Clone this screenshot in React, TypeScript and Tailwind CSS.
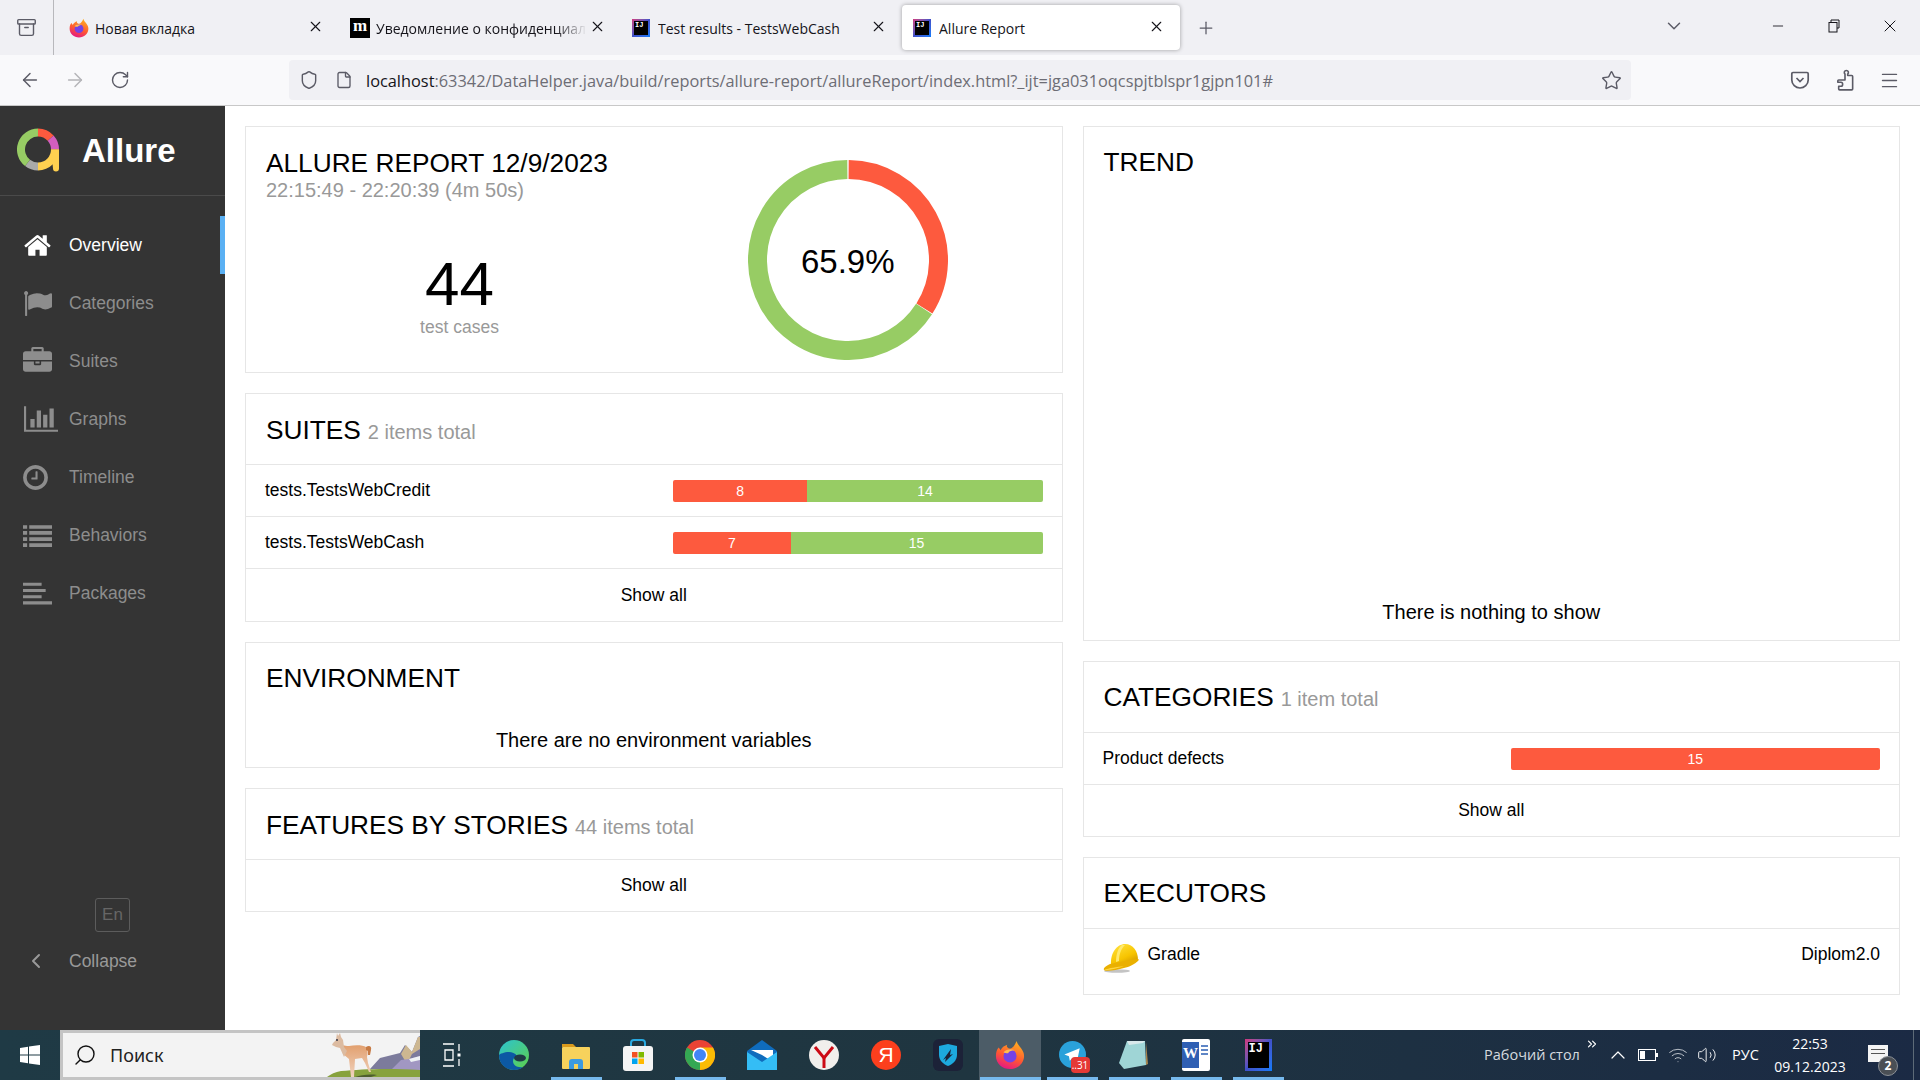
import * as React from "react"
import { ArrowLeft, ArrowRight, RotateCw, Shield, File, Star, X, Plus, ChevronDown, Minus, Menu, ChevronLeft, ChevronUp, Search, ChevronsRight, Volume2, Wifi, Archive } from "lucide-react"

// arc helper, angle is clockwise from 12 o'clock
function arc(cx: number, cy: number, r: number, from: number, to: number) {
    const p = (a: number) => {
        const t = (a * Math.PI) / 180
        return `${(cx + r * Math.sin(t)).toFixed(2)} ${(cy - r * Math.cos(t)).toFixed(2)}`
    }
    return `M${p(from)}A${r} ${r} 0 ${to - from > 180 ? 1 : 0} 1 ${p(to)}`
}

function FaIcon({ d, w = 1792, className }: { d: string; w?: number; className?: string }) {
    return (
        <svg viewBox={`0 0 ${w} 1792`} className={className} fill="currentColor">
            <path d={d} />
        </svg>
    )
}

const HOME = "M1472 992v480q0 26-19 45t-45 19h-384v-384h-256v384h-384q-26 0-45-19t-19-45v-480q0-1 .5-3t.5-3l575-474 575 474q1 2 1 6zm223-69l-62 74q-8 9-21 11h-3q-13 0-21-7l-692-577-692 577q-12 8-24 7-13-2-21-11l-62-74q-8-10-7-23.5t11-21.5l719-599q32-26 76-26t76 26l244 204v-195q0-14 9-23t23-9h192q14 0 23 9t9 23v408l219 182q10 8 11 21.5t-7 23.5z"
const FLAG = "M320 256q0 72-64 110v1266q0 13-9.5 22.5t-22.5 9.5h-64q-13 0-22.5-9.5t-9.5-22.5v-1266q-64-38-64-110 0-53 37.5-90.5t90.5-37.5 90.5 37.5 37.5 90.5zm1472 64v763q0 25-12.5 38.5t-39.5 27.5q-215 116-369 116-61 0-123.5-22t-108.5-48-115.5-48-142.5-22q-192 0-464 146-17 9-33 9-26 0-45-19t-19-45v-742q0-32 31-55 21-14 79-43 236-120 421-120 107 0 200 29t219 88q38 19 88 19 54 0 117.5-21t110-47 88-47 54.5-21q26 0 45 19t19 45z"
const CASE = "M640 256h512v-128h-512v128zm1152 640v480q0 66-47 113t-113 47h-1472q-66 0-113-47t-47-113v-480h672v160q0 26 19 45t45 19h320q26 0 45-19t19-45v-160h672zm-768 0v128h-256v-128h256zm768-480v384h-1792v-384q0-66 47-113t113-47h352v-160q0-40 28-68t68-28h576q40 0 68 28t28 68v160h352q66 0 113 47t47 113z"
const CHART = "M640 896v512h-256v-512h256zm384-512v1024h-256v-1024h256zm1024 1152v128h-2048v-1536h128v1408h1920zm-640-896v768h-256v-768h256zm384-384v1152h-256v-1152h256z"
const CLOCK = "M1024 544v448q0 14-9 23t-23 9h-320q-14 0-23-9t-9-23v-64q0-14 9-23t23-9h224v-352q0-14 9-23t23-9h64q14 0 23 9t9 23zm416 352q0-148-73-273t-198-198-273-73-273 73-198 198-73 273 73 273 198 198 273 73 273-73 198-198 73-273zm224 0q0 209-103 385.5t-279.5 279.5-385.5 103-385.5-103-279.5-279.5-103-385.5 103-385.5 279.5-279.5 385.5-103 385.5 103 279.5 279.5 103 385.5z"
const LIST = "M0 256h256v224H0zM0 624h256v224H0zM0 1008h256v224H0zM0 1376h256v224H0zM384 256h1408v224H384zM384 624h1408v224H384zM384 1008h1408v224H384zM384 1376h1408v224H384z"
const ALIGN = "M0 224h1150v190H0zM0 620h1400v190H0zM0 1000h1150v190H0zM0 1380h1792v190H0z"

const NAV = [
    { label: "Overview", d: HOME, active: true, icon: "h-[29px] w-[29px]" },
    { label: "Categories", d: FLAG, icon: "h-[29px] w-[29px]" },
    { label: "Suites", d: CASE, icon: "h-[29px] w-[29px]" },
    { label: "Graphs", d: CHART, w: 2048, icon: "h-[30px] w-[34px] ml-[1px]" },
    { label: "Timeline", d: CLOCK, icon: "h-[29px] w-[29px] ml-[-2px]" },
    { label: "Behaviors", d: LIST, icon: "h-[29px] w-[29px]" },
    { label: "Packages", d: ALIGN, icon: "h-[29px] w-[29px]" },
]

function AllureLogo() {
    return (
        <svg viewBox="0 0 43 44" className="w-[43px] h-[44px]" fill="none" strokeWidth="8">
            <path d={arc(21, 21.5, 17, 180, 218)} stroke="#aaaaaa" />
            <path d={arc(21, 21.5, 17, 218, 360)} stroke="#97cc64" />
            <path d={arc(21, 21.5, 17, 0, 48)} stroke="#fd5a3e" />
            <path d={arc(21, 21.5, 17, 48, 90)} stroke="#d35ebe" />
            <path d={arc(21, 21.5, 17, 90, 180)} stroke="#ffd050" />
            <path d="M34 21.5h8v19q0 3-3 3t-3-3z" fill="#ffd050" stroke="none" />
        </svg>
    )
}

function Sidebar() {
    return (
        <aside className="w-[225px] shrink-0 bg-[#343434] flex flex-col">
            <div className="h-[90px] border-b border-[#4a4a4a] flex items-center pl-[17px] pb-[1px]">
                <AllureLogo />
                <span className="ml-[22px] text-[33px] font-bold text-white leading-none">Allure</span>
            </div>
            <nav className="pt-[20px]">
                {NAV.map((item) => (
                    <div
                        key={item.label}
                        className={
                            item.active
                                ? "h-[58px] flex items-center pl-[23px] border-r-[5px] border-[#5ab0f3] text-white"
                                : "h-[58px] flex items-center pl-[23px] border-r-[5px] border-transparent text-[#8d8d8d]"
                        }
                    >
                        <span className="w-[46px] shrink-0 flex items-center">
                            <FaIcon d={item.d} w={item.w} className={item.icon} />
                        </span>
                        <span className="text-[17.5px]">{item.label}</span>
                    </div>
                ))}
            </nav>
            <div className="mt-auto pb-[40px]">
                <div className="ml-[95px] w-[35px] h-[34px] border border-[#5c5c5c] rounded-[3px] flex items-center justify-center text-[17px] text-[#666666]">
                    En
                </div>
                <div className="h-[58px] flex items-center text-[#999999] pl-[24px]">
                    <span className="w-[45px] shrink-0">
                        <ChevronLeft size={24} strokeWidth={2} />
                    </span>
                    <span className="text-[17.5px]">Collapse</span>
                </div>
            </div>
        </aside>
    )
}

function Card({ className, children }: { className?: string; children: React.ReactNode }) {
    return <section className={`border border-[#e6e6e6] bg-white ${className ?? ""}`}>{children}</section>
}

function CardTitle({ title, note, tight }: { title: string; note?: string; tight?: boolean }) {
    return (
        <div className={`h-[71px] shrink-0 px-[20px] flex items-center border-b border-[#e6e6e6] ${tight ? "" : "pt-[2px]"}`}>
            <span className="text-[26.25px] leading-none text-black">{title}</span>
            {note && <span className="ml-[7px] mt-[3px] text-[20px] leading-none text-[#999999]">{note}</span>}
        </div>
    )
}

function Row({ name, failed, passed }: { name: string; failed: number; passed?: number }) {
    return (
        <div className="h-[52px] shrink-0 px-[19px] flex items-center border-b border-[#e6e6e6]">
            <span className="w-[408px] shrink-0 text-[17.5px] text-black">{name}</span>
            <div className="flex-1 h-[22px] flex rounded-[2px] overflow-hidden text-[14px] text-white text-center leading-[23px]">
                <div className="bg-[#fd5a3e]" style={{ flexGrow: failed, flexBasis: 0 }}>{failed}</div>
                {passed !== undefined && <div className="bg-[#97cc64]" style={{ flexGrow: passed, flexBasis: 0 }}>{passed}</div>}
            </div>
        </div>
    )
}

function ShowAll() {
    return <div className="flex-1 flex items-center justify-center text-[17.5px] text-black">Show all</div>
}

function Donut() {
    return (
        <div className="relative w-[200px] h-[200px]">
            <svg viewBox="0 0 200 200" className="w-[200px] h-[200px]" fill="none" strokeWidth="19">
                <path d={arc(100, 100, 90.5, 0.4, 122.4)} stroke="#fd5a3e" />
                <path d={arc(100, 100, 90.5, 122.8, 359.6)} stroke="#97cc64" />
            </svg>
            <div className="absolute inset-0 flex items-center justify-center text-[33px] text-black pt-[3px]">65.9%</div>
        </div>
    )
}

function Hardhat() {
    return (
        <svg viewBox="0 0 36 30" className="w-[36px] h-[30px] shrink-0">
            <defs>
                <linearGradient id="hat" x1="0.2" y1="0" x2="0.8" y2="1">
                    <stop offset="0" stopColor="#ffe03a" />
                    <stop offset="0.6" stopColor="#f7c400" />
                    <stop offset="1" stopColor="#cf9500" />
                </linearGradient>
            </defs>
            <ellipse cx="14" cy="28" rx="13" ry="1.800" fill="#c4c4c4" />
            <path d="M8 22C7 10 14 1 22 1c8 0 13 7 13 16z" fill="url(#hat)" />
            <path d="M19 2c-4 3-6 9-6 17l3-1c0-7 2-12 6-16z" fill="#ffe96e" />
            <path d="M1 27c-1-2 2-4 6-6 9-2 18-4 28-5 1 0 1 1 0 2-3 3-9 6-14 7-7 2-18 4-20 2z" fill="#eab000" />
            <path d="M1 27c5-2 13-3 20-4-5 2-17 5-20 4z" fill="#ffd640" />
        </svg>
    )
}

function Overview() {
    return (
        <main className="flex-1 bg-white pt-[20px] px-[20px] flex gap-[20px] font-['Liberation_Sans',sans-serif]">
            <div className="flex-1 flex flex-col gap-[20px]">
                <Card className="h-[247px] flex">
                    <div className="w-[388px] shrink-0 pl-[20px] pt-[19px]">
                        <div className="text-[26.25px] leading-[34px] text-black whitespace-nowrap">ALLURE REPORT 12/9/2023</div>
                        <div className="text-[20px] leading-[20px] text-[#999999] whitespace-nowrap">22:15:49 - 22:20:39 (4m 50s)</div>
                        <div className="mt-[49px] ml-[19px] flex flex-col items-center">
                            <div className="text-[62px] leading-[70px] text-black">44</div>
                            <div className="text-[17.5px] leading-[17px] text-[#999999]">test cases</div>
                        </div>
                    </div>
                    <div className="flex-1 flex justify-center pt-[33px]">
                        <Donut />
                    </div>
                </Card>
                <Card className="h-[229px] flex flex-col">
                    <CardTitle title="SUITES" note="2 items total" />
                    <Row name="tests.TestsWebCredit" failed={8} passed={14} />
                    <Row name="tests.TestsWebCash" failed={7} passed={15} />
                    <ShowAll />
                </Card>
                <Card className="h-[126px]">
                    <div className="h-[71px] px-[20px] flex items-center text-[26.25px] text-black">ENVIRONMENT</div>
                    <div className="text-center text-[20px] leading-[24px] mt-[14px] text-black">There are no environment variables</div>
                </Card>
                <Card className="h-[124px] flex flex-col">
                    <CardTitle title="FEATURES BY STORIES" note="44 items total" />
                    <ShowAll />
                </Card>
            </div>
            <div className="flex-1 flex flex-col gap-[20px]">
                <Card className="h-[515px] flex flex-col">
                    <div className="h-[71px] px-[20px] pt-[1px] flex items-center text-[26.25px] text-black">TREND</div>
                    <div className="mt-auto pb-[16px] text-center text-[20px] leading-[24px] text-black">There is nothing to show</div>
                </Card>
                <Card className="h-[176px] flex flex-col">
                    <CardTitle title="CATEGORIES" note="1 item total" tight />
                    <Row name="Product defects" failed={15} />
                    <ShowAll />
                </Card>
                <Card className="h-[138px]">
                    <CardTitle title="EXECUTORS" tight />
                    <div className="px-[19px] pt-[14px] flex text-[17.5px] text-black leading-[22px]">
                        <Hardhat />
                        <span className="ml-[9px]">Gradle</span>
                        <span className="ml-auto">Diplom2.0</span>
                    </div>
                </Card>
            </div>
        </main>
    )
}

function FirefoxIcon({ size }: { size: number }) {
    return (
        <svg viewBox="0 0 32 32" width={size} height={size}>
            <defs>
                <linearGradient id={`ff${size}`} x1="0.7" y1="0" x2="0.3" y2="1">
                    <stop offset="0" stopColor="#ffb020" />
                    <stop offset="0.55" stopColor="#ff5a30" />
                    <stop offset="1" stopColor="#e31587" />
                </linearGradient>
            </defs>
            <path d="M23 1c1 4 3 5 5 8 2 3 3 5 3 8 0 8-7 14-15 14S1 25 1 17c0-4 1-7 3-9l2 3c1-3 4-5 7-6-1 2 0 3 2 4 3 1 6-3 8-8z" fill={`url(#ff${size})`} />
            <circle cx="16" cy="17" r="7" fill="#7542e5" />
            <path d="M9 13c3-3 8-4 12-2-3 0-6 1-7 3-2 0-4 0-5-1z" fill="#ffbd4f" />
        </svg>
    )
}

function IjIcon({ size, text }: { size: number; text: string }) {
    const w = size === 18 ? "w-[18px] h-[18px] p-[2px]" : "w-[27px] h-[32px] p-[3px]"
    return (
        <div className={`${w} bg-linear-to-br from-[#d2337c] via-[#3f51c9] to-[#087cfa] shrink-0`}>
            <div className={`w-full h-full bg-black text-white font-bold font-['Liberation_Mono',monospace] leading-none pl-[1px] pt-[1px] ${text}`}>IJ</div>
        </div>
    )
}

function Tab({ width, icon, label, active, fade }: { width: string; icon: React.ReactNode; label: string; active?: boolean; fade?: boolean }) {
    return (
        <div className={`${width} h-[45px] shrink-0 flex items-center pl-[11px] pr-[15px] rounded-[4px] ${active ? "bg-white shadow-[0_0_4px_rgba(0,0,0,0.35)]" : ""}`}>
            <span className="w-[26px] shrink-0">{icon}</span>
            <span className={`flex-1 min-w-0 pt-[1px] whitespace-nowrap overflow-hidden text-[14px] text-[#15141a] ${fade ? "[mask-image:linear-gradient(to_right,black_85%,transparent)]" : ""}`}>{label}</span>
            <X size={17} strokeWidth={1.6} className="ml-[2px] text-[#15141a] shrink-0 mb-[2px]" />
        </div>
    )
}

function BrowserChrome() {
    return (
        <header className="shrink-0 font-['Open_Sans',sans-serif]">
            <div className="h-[55px] bg-[#f0f0f4] flex items-center">
                <div className="w-[54px] h-[55px] shrink-0 flex items-center justify-center border-r border-[#b8b8bc] text-[#5b5b66]">
                    <Archive size={21} strokeWidth={1.6} />
                </div>
                <div className="flex items-center pl-[4px]">
                    <Tab width="w-[281px]" icon={<FirefoxIcon size={20} />} label="Новая вкладка" />
                    <Tab width="w-[282px]" label="Уведомление о конфиденциальности" fade
                        icon={<div className="w-[20px] h-[20px] bg-black text-white font-bold text-[17px] leading-[16px] text-center font-['Liberation_Serif',serif]">m</div>} />
                    <Tab width="w-[281px]" icon={<IjIcon size={18} text="text-[7px]" />} label="Test results - TestsWebCash" />
                    <Tab width="w-[278px]" icon={<IjIcon size={18} text="text-[7px]" />} label="Allure Report" active />
                </div>
                <Plus size={20} strokeWidth={1.5} className="ml-[16px] text-[#5b5b66]" />
                <ChevronDown size={22} strokeWidth={1.6} className="ml-[447px] text-[#5b5b66] mb-[3px]" />
                <Minus size={16} strokeWidth={1.3} className="ml-[85px] text-[#15141a] mb-[3px]" />
                <svg viewBox="0 0 12 14" className="w-[12px] h-[14px] ml-[42px] mb-[3px]" fill="none" stroke="#15141a" strokeWidth="1">
                    <path d="M3 3V1h8v8H9" />
                    <rect x="1" y="3.5" width="8" height="9.5" />
                </svg>
                <X size={20} strokeWidth={1.2} className="ml-[40px] text-[#15141a] mb-[3px]" />
            </div>
            <div className="h-[51px] bg-[#f9f9fb] border-b border-[#c8c8c8] flex items-center text-[#5b5b66]">
                <ArrowLeft size={22} strokeWidth={1.6} className="ml-[19px]" />
                <ArrowRight size={22} strokeWidth={1.6} className="ml-[23px] text-[#b4b4b8]" />
                <RotateCw size={20} strokeWidth={1.7} className="ml-[24px]" />
                <div className="ml-[159px] w-[1342px] h-[40px] rounded-[4px] bg-[#f0f0f4] flex items-center pl-[10px] pr-[9px]">
                    <Shield size={20} strokeWidth={1.7} />
                    <File size={18} strokeWidth={1.8} className="ml-[16px]" />
                    <span className="ml-[13px] pt-[2px] text-[16.35px] whitespace-nowrap text-[#6d6d75]">
                        <span className="text-[#15141a]">localhost</span>:63342/DataHelper.java/build/reports/allure-report/allureReport/index.html?_ijt=jga031oqcspjtblspr1gjpn101#
                    </span>
                    <Star size={21} strokeWidth={1.6} className="ml-auto" />
                </div>
                <svg viewBox="0 0 20 20" className="w-[20px] h-[20px] ml-[159px]" fill="none" stroke="#5b5b66" strokeWidth="1.7">
                    <path d="M3 2.5h14q1.2 0 1.2 1.2V10c0 4.5-3.8 8-8.2 8s-8.2-3.5-8.2-8V3.700q0-1.200 1.200-1.200z" />
                    <path d="M6.500 8l3.500 3.500L13.500 8" />
                </svg>
                <svg viewBox="0 0 20 24" className="w-[18px] h-[22px] ml-[26px]" fill="none" stroke="#5b5b66" strokeWidth="1.800" strokeLinejoin="round">
                    <path d="M10 5.500c-1.500-1.500-.8-4 1.500-4s3 2.500 1.500 4v1.500h4.500q1 0 1 1v14q0 1-1 1H4q-1 0-1-1v-3h2.500c2.500 0 2.500-4.500 0-4.500H2v-1.500q0-1 1-1h7z" />
                </svg>
                <Menu size={21} strokeWidth={1.6} className="ml-[25px]" />
            </div>
        </header>
    )
}

// coordinates traced from the search box picture
function Llama() {
    return (
        <svg viewBox="0 0 95 44" className="w-[95px] h-[44px] shrink-0">
            <defs>
                <linearGradient id="fur" x1="0" y1="0" x2="0" y2="1">
                    <stop offset="0" stopColor="#e2a06f" />
                    <stop offset="1" stopColor="#f0d3bf" />
                </linearGradient>
            </defs>
            <path d="M45 36l10-11 20-5 5-8 7 7 6-15 2-1v34z" fill="#7c7b9c" />
            <path d="M76 21l5-9 6 7 6-15 2 0v12l-8 5-5 10z" fill="#cdb791" />
            <path d="M66 37l10-10 8-1 11-3v14z" fill="#a197c2" />
            <path d="M84 26l11-3v4l-9 2z" fill="#eef2f5" />
            <path d="M2 44c4-3 8-5 14-6 20-2 50-3 79-1v7z" fill="#87a23d" />
            <path d="M30 44c6-2 14-3 22-2l-6 2z" fill="#4f5e2e" />
            <path d="M17 13c1-1 3 0 7 0 6-1 14-1 17 1 2 2 2 6 1 10l1 6 3 9h-2l-4-9-3-5-7 1-1 18h-3l-2-18-6-5-1-8z" fill="url(#fur)" />
            <path d="M12 0l1 3 2-3 1 4 2 3 1 7 3 4-3 6-4-9-4-1-4-2 1-2 3-3z" fill="#dcbba1" />
            <path d="M41 14c3-2 6-1 5 3l-1 5-2 0 0-4-2-1z" fill="#c77b45" />
            <circle cx="12" cy="7" r="1" fill="#333344" />
        </svg>
    )
}

function WinIcon({ children, mark, wide }: { children: React.ReactNode; mark?: boolean; wide?: boolean }) {
    return (
        <div className={`w-[62px] h-[50px] shrink-0 flex items-center justify-center ${wide ? "bg-[#4c5c67]" : ""} relative`}>
            {children}
            {mark && <div className={`absolute bottom-0 h-[3px] bg-[#76b9ed] ${wide ? "w-[61px]" : "w-[51px]"}`} />}
        </div>
    )
}

function Taskbar() {
    return (
        <footer className="h-[50px] shrink-0 bg-linear-to-r from-[#1f3a45] via-[#1f3540] to-[#1b2a44] flex items-center font-['Open_Sans',sans-serif]">
            <div className="w-[60px] shrink-0 flex justify-center">
                <svg viewBox="0 0 20 20" className="w-[20px] h-[20px]" fill="#ffffff">
                    <path d="M0 3l8-1.200V9.500H0zM9 1.600L20 0v9.500H9zM0 10.500h8v7.700L0 17zM9 10.500h11V20L9 18.400z" />
                </svg>
            </div>
            <div className="w-[360px] h-[50px] shrink-0 bg-[#f3f3f3] border-y-[3px] border-l-[3px] border-[#c4c4c4] flex items-center overflow-hidden">
                <Search size={24} strokeWidth={1.4} className="ml-[10px] -scale-x-100 text-[#111111]" />
                <span className="ml-[13px] text-[18px] text-[#222222] font-['Noto_Sans',sans-serif]">Поиск</span>
                <div className="ml-auto"><Llama /></div>
            </div>
            <div className="w-[1px] shrink-0" />
            <WinIcon>
                <svg viewBox="0 0 20 24" className="w-[20px] h-[24px]" fill="none" stroke="#ffffff" strokeWidth="1.300">
                    <path d="M1 1h11M1 23h11M3 7h8v10H3zM17 1v7M17 16v7" />
                    <rect x="15.500" y="10.500" width="3" height="3" fill="#ffffff" stroke="none" />
                </svg>
            </WinIcon>
            <WinIcon>
                <svg viewBox="0 0 30 30" className="w-[30px] h-[30px]">
                    <defs>
                        <linearGradient id="edge" x1="0" y1="0" x2="1" y2="1">
                            <stop offset="0" stopColor="#2bc3d2" />
                            <stop offset="1" stopColor="#5fd048" />
                        </linearGradient>
                    </defs>
                    <circle cx="15" cy="15" r="15" fill="url(#edge)" />
                    <path d="M0 15C0 25 8 30 15 30c4 0 7-1 9-3-6 1-10-2-10-6 0-2 1-4 4-5-2-3-5-4-8-4-5 0-9 2-10 3z" fill="#0c59a4" />
                    <ellipse cx="21" cy="18" rx="6" ry="3.500" fill="#1f3a45" />
                </svg>
            </WinIcon>
            <WinIcon mark>
                <svg viewBox="0 0 28 28" className="w-[28px] h-[28px]">
                    <path d="M0 3h11l3 3H0z" fill="#d99a1c" />
                    <rect x="0" y="6" width="28" height="22" rx="1" fill="#f7d25c" />
                    <path d="M7 28v-7q0-3 3-3h8q3 0 3 3v7h-5v-5h-4v5z" fill="#3b9ae1" />
                </svg>
            </WinIcon>
            <WinIcon>
                <svg viewBox="0 0 30 32" className="w-[30px] h-[32px]">
                    <path d="M8 8V4q0-3 3-3h8q3 0 3 3v4" fill="none" stroke="#29a9e0" strokeWidth="2" />
                    <rect x="0" y="7" width="30" height="25" rx="3" fill="#f4f4f4" />
                    <rect x="9" y="13" width="5.500" height="5.500" fill="#f25022" />
                    <rect x="15.500" y="13" width="5.500" height="5.500" fill="#7fba00" />
                    <rect x="9" y="19.500" width="5.500" height="5.500" fill="#00a4ef" />
                    <rect x="15.500" y="19.500" width="5.500" height="5.500" fill="#ffb900" />
                </svg>
            </WinIcon>
            <WinIcon mark>
                <svg viewBox="0 0 30 30" className="w-[30px] h-[30px]">
                    <circle cx="15" cy="15" r="15" fill="#ea4335" />
                    <path d="M15 15L2 7.500A15 15 0 0 0 15 30z" fill="#34a853" />
                    <path d="M15 30A15 15 0 0 0 28 7.500H15z" fill="#fbbc05" />
                    <circle cx="15" cy="15" r="7.500" fill="#ffffff" />
                    <circle cx="15" cy="15" r="6" fill="#4285f4" />
                </svg>
            </WinIcon>
            <WinIcon>
                <svg viewBox="0 0 30 30" className="w-[30px] h-[30px]">
                    <path d="M15 0l15 11v19H0V11z" fill="#0f6cbd" />
                    <path d="M4 10h22v12L15 15z" fill="#ffffff" />
                    <path d="M0 12l15 10 15-10v18H0z" fill="#34bdf5" />
                </svg>
            </WinIcon>
            <WinIcon>
                <svg viewBox="0 0 30 30" className="w-[30px] h-[30px]">
                    <circle cx="15" cy="15" r="15" fill="#f1efec" />
                    <path d="M6 7l9 11 9-11" fill="none" stroke="#cc0a15" strokeWidth="3" />
                    <path d="M15 17v11" stroke="#cc0a15" strokeWidth="3" />
                </svg>
            </WinIcon>
            <WinIcon>
                <div className="w-[30px] h-[30px] rounded-full bg-[#fc3f1d] text-white text-[21px] leading-[30px] text-center font-['Liberation_Sans',sans-serif]">Я</div>
            </WinIcon>
            <WinIcon>
                <div className="w-[30px] h-[32px] rounded-[6px] bg-[#1c2238] flex items-center justify-center">
                    <svg viewBox="0 0 20 22" className="w-[20px] h-[22px]">
                        <path d="M1 2l9-2 9 2v9c0 5-4 9-9 11-5-2-9-6-9-11z" fill="#1da9de" />
                        <path d="M5 16l8-11-1 6 3-1-8 8 1-4z" fill="#1c2238" />
                    </svg>
                </div>
            </WinIcon>
            <WinIcon mark wide>
                <FirefoxIcon size={30} />
            </WinIcon>
            <WinIcon mark>
                <div className="relative w-[27px] h-[30px]">
                    <svg viewBox="0 0 30 30" className="w-[27px] h-[27px] mt-[1px]">
                        <circle cx="15" cy="15" r="15" fill="#2aa1da" />
                        <path d="M6 15L23 8l-3 15-5-4-3 3-1-5z" fill="#ffffff" />
                    </svg>
                    <div className="absolute right-[-4px] bottom-[-3px] w-[19px] h-[16px] rounded-[4px] bg-[#e53935] text-white text-[10px] leading-[16px] text-center">..31</div>
                </div>
            </WinIcon>
            <WinIcon mark>
                <svg viewBox="0 0 30 32" className="w-[30px] h-[32px]">
                    <path d="M8 2l18 0 1 24-22 4-5-6z" fill="#9fd5d6" />
                    <path d="M8 2l18 0-2 2-14 2z" fill="#d8e8ea" />
                    <path d="M27 3l2 22-2 1z" fill="#a6854f" />
                </svg>
            </WinIcon>
            <WinIcon mark>
                <div className="w-[28px] h-[32px] bg-white rounded-[2px] flex items-start overflow-hidden relative">
                    <div className="w-[17px] h-[26px] mt-[3px] bg-[#2f5fb3] text-white text-[15px] font-bold leading-[22px] text-center font-['Liberation_Serif',serif]">W</div>
                    <div className="flex-1 mt-[6px] ml-[2px] mr-[2px] flex flex-col gap-[2px]">
                        <div className="h-[2px] bg-[#5f86c6]" />
                        <div className="h-[2px] bg-[#5f86c6]" />
                        <div className="h-[2px] bg-[#5f86c6]" />
                    </div>
                </div>
            </WinIcon>
            <WinIcon mark>
                <IjIcon size={27} text="text-[12px]" />
            </WinIcon>
            <div className="flex-1 flex items-center text-[#d5dadf] min-w-0">
                <span className="ml-[195px] w-[93px] shrink-0 text-[14.5px] whitespace-nowrap">Рабочий стол</span>
                <ChevronsRight size={14} strokeWidth={2} className="ml-[8px] mb-[22px] text-white shrink-0" />
                <ChevronUp size={24} strokeWidth={1.2} className="ml-[7px] text-white shrink-0" />
                <svg viewBox="0 0 20 12" className="w-[20px] h-[12px] ml-[8px] shrink-0" fill="none" stroke="#ffffff" strokeWidth="1">
                    <rect x="0.500" y="0.500" width="17" height="11" />
                    <rect x="2" y="2" width="5" height="8" fill="#ffffff" stroke="none" />
                    <rect x="18" y="4" width="2" height="4" fill="#ffffff" stroke="none" />
                </svg>
                <Wifi size={20} strokeWidth={1.1} className="ml-[10px] text-[#c8ced4] shrink-0" />
                <Volume2 size={20} strokeWidth={1.1} className="ml-[9px] text-white shrink-0" />
                <span className="ml-[15px] w-[27px] shrink-0 text-[14.5px] text-white">РУС</span>
                <div className="ml-[15px] w-[72px] flex flex-col items-center text-[14px] leading-[23px] text-white shrink-0">
                    <span>22:53</span>
                    <span className="whitespace-nowrap">09.12.2023</span>
                </div>
                <div className="relative ml-[22px] w-[20px] h-[17px] bg-[#f4f4f4] shrink-0 mb-[3px]">
                    <div className="absolute left-[3px] right-[3px] top-[4px] h-[1px] bg-[#555555]" />
                    <div className="absolute left-[3px] right-[3px] top-[8px] h-[1px] bg-[#555555]" />
                    <div className="absolute right-[-10px] bottom-[-14px] w-[20px] h-[20px] rounded-full bg-[#4a4f55] border border-[#8a8f95] text-white font-bold text-[12px] leading-[18px] text-center">2</div>
                </div>
                <div className="ml-[25px] w-px h-[50px] bg-[#5d6b78] shrink-0" />
            </div>
        </footer>
    )
}

export default function App() {
    return (
        <div className="w-[1920px] h-[1080px] overflow-hidden flex flex-col font-['Liberation_Sans',sans-serif]">
            <BrowserChrome />
            <div className="flex-1 flex min-h-0">
                <Sidebar />
                <Overview />
            </div>
            <Taskbar />
        </div>
    )
}
